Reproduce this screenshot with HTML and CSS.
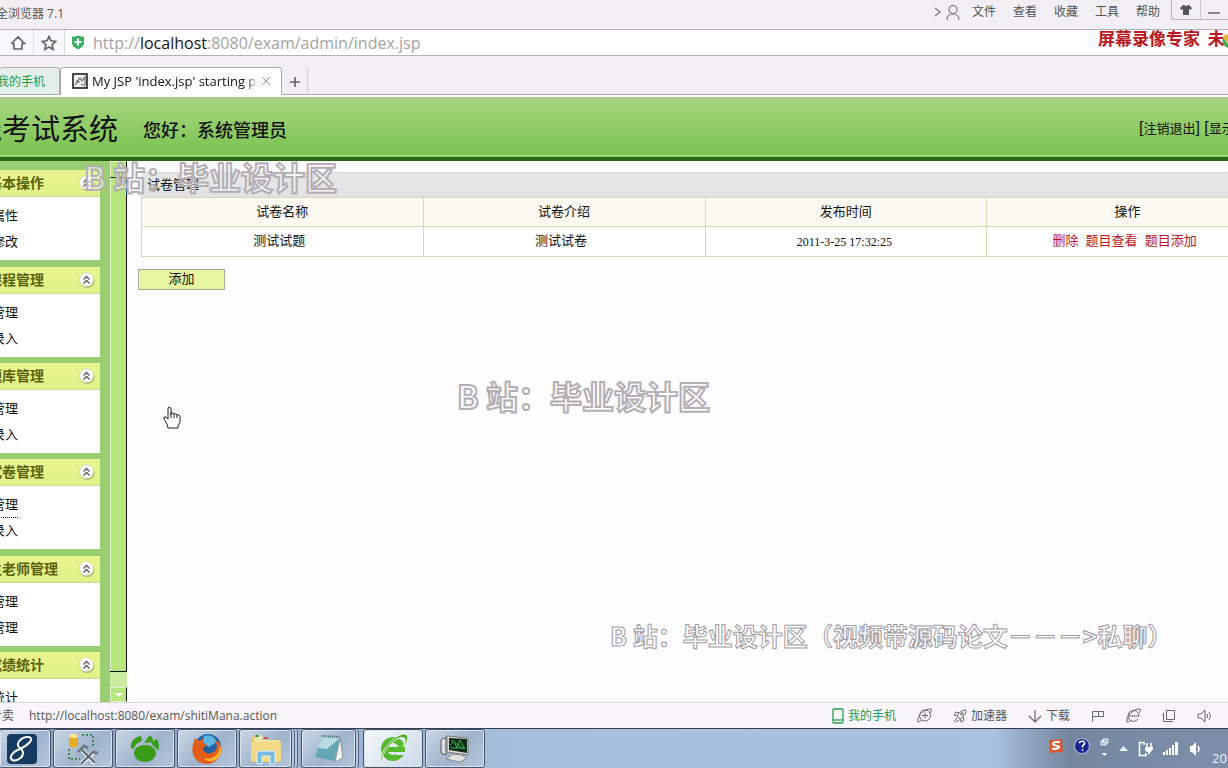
FILE: index.html
```html
<!DOCTYPE html>
<html lang="zh-CN">
<head>
<meta charset="utf-8">
<title>考试系统</title>
<link rel="stylesheet" href="styles.css">
</head>
<body>
<svg class="defs" aria-hidden="true">
  <symbol id="collapse" viewBox="0 0 16 16">
    <circle cx="8.5" cy="9" r="7" fill="#8a9060" opacity=".55"/>
    <circle cx="7.5" cy="7.5" r="7" fill="#fff" stroke="#c8cba8" stroke-width=".7"/>
    <path d="M4.500 7.500l3-3 3 3M4.500 11.500l3-3 3 3" fill="none" stroke="#555" stroke-width="1.300"/>
  </symbol>
</svg>
<div class="app">
  <header class="titlebar">
    <div class="clip-left title"><span>全浏览器 7.1</span></div>
    <nav class="menu">
      <svg width="28" height="18" viewBox="0 0 28 18" fill="none" stroke="#777" stroke-width="1.2"><path d="m2 5 5 4-5 4"/><circle cx="20" cy="6.500" r="4"/><path d="M14 17c0-4 2-6 6-6s6 2 6 6"/></svg>
      <button>文件</button><button>查看</button><button>收藏</button><button>工具</button><button>帮助</button>
    </nav>
    <div class="window-buttons">
      <button aria-label="皮肤"><svg width="12" height="10" viewBox="0 0 12 10"><path d="M3 0h1.500c.5 1.500 2.500 1.500 3 0H9l3 3-1.500 2L9 4v6H3V4L1.500 5 0 3z" fill="#555"/></svg></button>
      <button aria-label="最小化"><svg width="12" height="10" viewBox="0 0 12 10"><path d="M0 8h12" stroke="#666" stroke-width="1.500"/></svg></button>
    </div>
  </header>

  <div class="address">
    <button class="tool" aria-label="主页"><svg width="16" height="16" viewBox="0 0 16 16" fill="none" stroke="#666" stroke-width="1.700"><path d="M4 8v6h8V8M1.500 8.500 8 2l6.500 6.500H12M4 8.500H1.500"/></svg></button>
    <button class="tool" aria-label="收藏"><svg width="16" height="16" viewBox="0 0 16 16" fill="none" stroke="#666" stroke-width="1.700"><path d="m8 1.500 2 4.300 4.700.6-3.500 3.200.9 4.700L8 12l-4.100 2.300.9-4.700L1.300 6.400 6 5.800z"/></svg></button>
    <svg class="shield" width="14" height="15" viewBox="0 0 14 15"><path d="M1 1.500Q4 2 7 .500q3 1.500 6 1V9q-1 3-6 5.500Q2 12 1 9z" fill="#3dae67"/><path d="M7 3.500v7M3.500 7h7" stroke="#fff" stroke-width="2"/></svg>
    <div class="url" role="textbox" aria-label="地址">http://<b>localhost</b>:8080/exam/admin/index.jsp</div>
  </div>

  <div class="tabs">
    <button class="tab phone"><span>我的手机</span></button>
    <div class="tab current">
      <svg width="16" height="16" viewBox="0 0 16 16"><path d="M1 1h14v14H1z" fill="#f4f4f4" stroke="#111" stroke-width="1.500"/><path d="M3 12q2-4 5-3M6 7l2-2 2 3 3-4v8M4 8h3M9 11l4 2" fill="none" stroke="#777" stroke-width="1.300"/></svg>
      <span class="tab-title">My JSP 'index.jsp' starting page</span>
      <button aria-label="关闭"><svg width="8" height="8" viewBox="0 0 8 8"><path d="m0 0 8 8M8 0 0 8" stroke="#999"/></svg></button>
    </div>
    <button class="new-tab" aria-label="新标签"><svg width="10" height="10" viewBox="0 0 10 10"><path d="M5 0v10M0 5h10" stroke="#666" stroke-width="1.700"/></svg></button>
  </div>

  <div class="banner">
    <h1 class="clip-left"><span>线考试系统</span></h1>
    <p>您好：系统管理员</p>
    <div class="session">[<a href="#">注销退出</a>] [<a href="#">显示</a>]</div>
  </div>

  <div class="frames">
    <aside class="sidebar">
      <section><h2><span class="clip-left"><span>基本操作</span></span><svg width="16" height="16"><use href="#collapse"/></svg></h2><ul><li><a href="#">属性</a></li><li><a href="#">修改</a></li></ul></section>
      <section><h2><span class="clip-left"><span>课程管理</span></span><svg width="16" height="16"><use href="#collapse"/></svg></h2><ul><li><a href="#">管理</a></li><li><a href="#">录入</a></li></ul></section>
      <section><h2><span class="clip-left"><span>题库管理</span></span><svg width="16" height="16"><use href="#collapse"/></svg></h2><ul><li><a href="#">管理</a></li><li><a href="#">录入</a></li></ul></section>
      <section><h2><span class="clip-left"><span>试卷管理</span></span><svg width="16" height="16"><use href="#collapse"/></svg></h2><ul><li><a href="#" class="focused">管理</a></li><li><a href="#">录入</a></li></ul></section>
      <section><h2><span class="clip-left wide"><span>生老师管理</span></span><svg width="16" height="16"><use href="#collapse"/></svg></h2><ul><li><a href="#">管理</a></li><li><a href="#">管理</a></li></ul></section>
      <section><h2><span class="clip-left"><span>成绩统计</span></span><svg width="16" height="16"><use href="#collapse"/></svg></h2><ul><li><a href="#">统计</a></li></ul></section>
    </aside>
    <div class="scrollbar">
      <button class="up" aria-label="向上"><svg width="8" height="4" viewBox="0 0 8 4"><path d="M0 4h8L4 0z" fill="#e4f5cc"/></svg></button>
      <div class="thumb"></div>
      <div class="track"></div>
      <button aria-label="向下"><svg width="8" height="4" viewBox="0 0 8 4"><path d="M0 0h8L4 4z" fill="#fff"/></svg></button>
    </div>
    <main>
      <table>
        <caption>试卷管理</caption>
        <thead><tr><th>试卷名称</th><th>试卷介绍</th><th>发布时间</th><th>操作</th></tr></thead>
        <tbody><tr><td>测试试题</td><td>测试试卷</td><td class="date">2011-3-25 17:32:25</td><td><div class="actions"><a href="#">删除</a><a href="#">题目查看</a><a href="#">题目添加</a></div></td></tr></tbody>
      </table>
      <button class="add">添加</button>
    </main>
  </div>

  <footer class="status">
    <div class="clip-left promo"><span>专卖</span></div>
    <span class="link">http://localhost:8080/exam/shitiMana.action</span>
    <div class="status-tools">
      <button class="green"><svg width="12" height="16" viewBox="0 0 12 16" fill="none" stroke="#26a04a" stroke-width="1.300"><rect x="1" y="1" width="10" height="14" rx="1"/><path d="M1 12h10"/></svg>我的手机</button>
      <button aria-label="医生"><svg width="15" height="15" viewBox="0 0 15 15" fill="none" stroke="#666"><circle cx="8" cy="7.500" r="5.500"/><path d="M8 4.500v6M5 7.500h6M1 14C-1 9 8 0 14 1c1 1 0 3-1 4M1 14c2 0 3-1 4-2"/></svg></button>
      <button><svg width="14" height="14" viewBox="0 0 14 14" fill="none" stroke="#666"><path d="M4 7c1-3 5-6 9-6 0 4-3 8-6 9zM4 7 1 6l2-3 3 1M7 10l1 3 3-2-1-3M4 9l-3 4M6 11l-3 2"/><circle cx="9" cy="5" r="1.300"/></svg>加速器</button>
      <button><svg width="14" height="14" viewBox="0 0 14 14" fill="none" stroke="#666" stroke-width="1.200"><path d="M7 1v12M1 7l6 6 6-6"/></svg>下载</button>
      <button aria-label="标记"><svg width="14" height="14" viewBox="0 0 14 14" fill="none" stroke="#666"><path d="M1.500 13V2.500h6v5h-6M7.500 2.500h5v5h-5"/></svg></button>
      <button aria-label="浏览器"><svg width="15" height="15" viewBox="0 0 15 15" fill="none" stroke="#666"><path d="M3 8h10a5.500 5.500 0 1 0-1 3M1 14C-1 9 8 0 14 1c1 1 0 3-1 4M1 14c2 0 3-1 4-2"/></svg></button>
      <button aria-label="窗口"><svg width="14" height="14" viewBox="0 0 14 14" fill="none" stroke="#666"><path d="M4.500 1.500h8v9h-8zM1.500 4v8.500H11"/></svg></button>
      <button aria-label="声音"><svg width="16" height="14" viewBox="0 0 16 14" fill="none" stroke="#666"><path d="M1 5h3l4-4v12L4 9H1zM10 5q1 2 0 4M12 3q3 4 0 8"/></svg></button>
    </div>
  </footer>

  <div class="taskbar">
    <button class="task first" aria-label="应用"><svg width="30" height="30" viewBox="0 0 30 30"><rect width="30" height="30" rx="4" fill="#173b60"/><path d="M13 14C7 10 15 2 22 3c6 2-1 8-9 12-8 3-11 8-8 11 5 2 14-4 10-10-1-2-3-2-2-3" fill="none" stroke="#fff" stroke-width="2"/></svg></button>
    <button class="task" aria-label="数据工具"><svg width="32" height="32" viewBox="0 0 32 32"><path d="M15 2h11v11M2 16v10h11" fill="none" stroke="#3c8a50" stroke-width="2" stroke-dasharray="2 2"/><path d="M2 3v10q5 3 9 0V3" fill="#e5ad22"/><ellipse cx="6.500" cy="3" rx="4.500" ry="2" fill="#ffe692"/><path d="m13 15 15 16M27 19 14 31" stroke="#eef3f5" stroke-width="4"/><path d="m14 16 14 14M26 19 14 31" stroke="#58656d" stroke-width="2"/><path d="m11 19 6-6 4 2M25 19l6 1" fill="none" stroke="#6d7a82" stroke-width="3"/></svg></button>
    <button class="task" aria-label="浏览助手"><svg width="30" height="28" viewBox="0 0 30 28" fill="#399b16"><path d="M4 18c0-5 5-8 11-8s11 3 11 8-5 9-11 9S4 23 4 18zM1 13C0 6 5 2 11 1l1 5C7 8 5 10 4 14zM14 8l5-7c3 0 4 2 4 6zM21 8l5-4c3 2 3 6 3 11-3-1-5-4-8-7z"/></svg></button>
    <button class="task" aria-label="Firefox"><svg width="32" height="32" viewBox="0 0 32 32"><circle cx="17" cy="14" r="13" fill="#1f62a6"/><path d="M13 3q9-3 13 6l-8 5-7-5z" fill="#58b8e3"/><path d="M4 5 8 8l5-3-1 5 4 2-4 3c0 6 8 7 12 3 3-4 2-8-1-12 6 3 8 8 7 13-2 8-8 12-14 12C6 31-1 22 2 12z" fill="#e35d18"/><path d="M28 9c3 11-6 19-15 16 5 7 18 2 17-9z" fill="#f9b52f"/></svg></button>
    <button class="task stack" aria-label="资源管理器"><svg width="34" height="32" viewBox="0 0 34 32"><path d="M2 4h8l2 3h19v22H2z" fill="#e8c963"/><path d="M5 2h8v5h17v19H5z" fill="#f7e6a0"/><path d="M2 9h30v19H2z" fill="#f2da85"/><path d="M6 2h4v2H6z" fill="#42a04d"/><path d="M15 4h4v2h-4z" fill="#d5553b"/><path d="M8 31V20q0-2 2-2h14q2 0 2 2v11h-5v-8h-8v8z" fill="#78bce2" stroke="#dff5ff"/></svg></button>
    <button class="task stack second" aria-label="记事本"><svg width="32" height="30" viewBox="0 0 32 30"><path d="M27 3 30 24l-8 4z" fill="#f1f5f3" stroke="#899594"/><path d="M9 3 27 4 21 27 2 23z" fill="#64a6b5"/><path d="M9 3 27 4 14 15 5 14z" fill="#b5dce0"/><path d="m9 2 18 1" stroke="#526d76" stroke-width="2" stroke-dasharray="1 1"/></svg></button>
    <button class="task active" aria-label="安全浏览器"><svg width="32" height="32" viewBox="0 0 32 32"><circle cx="16" cy="16" r="9" fill="none" stroke="#55b82f" stroke-width="6"/><path d="M8 14h20v5H8z" fill="#55b82f"/><path d="M19 19h12v3H19z" fill="#dce6f0"/><path d="M6 30C-4 23 23-5 30 2c2 3 0 8-4 12 2-5 3-8 1-9C20 1 1 22 6 30z" fill="#4fae2a" stroke="#fff" stroke-width=".8"/></svg></button>
    <button class="task" aria-label="录像专家"><svg width="32" height="30" viewBox="0 0 32 30"><path d="M2 6 7 3v18l-5-2z" fill="#ddd" stroke="#555"/><path d="M8 2 29 4v17L8 18z" fill="#ddd" stroke="#777"/><path d="M10 4 28 5v14L10 16z" fill="#102b18"/><path d="m11 11 4-4 3 7 3-8 5 9M11 14h15M12 6l13 9" fill="none" stroke="#39a64a"/><path d="m14 20 8 1 6 3-7 4-14-3z" fill="#e1e2df" stroke="#888"/></svg></button>
    <div class="tray">
      <svg class="high" width="16" height="16" viewBox="0 0 15 15"><path d="m1 2 12-1 1 12-12 1z" fill="#df5631"/><path d="M11 4C4 3 3 6 7 7c6 1 3 4-3 3" fill="none" stroke="#fff" stroke-width="2"/></svg>
      <svg class="high" width="16" height="16" viewBox="0 0 15 15"><circle cx="7.500" cy="7.500" r="7" fill="#172494" stroke="#a8b6d6"/><path d="M5 5q0-2 2.500-2T10 5q0 1-2 2.500V9M8 10.500v1.500" fill="none" stroke="#fff" stroke-width="1.500"/></svg>
      <svg class="high" width="9" height="20" viewBox="0 0 9 20"><path d="M3 1h5v4H3zM1 3h5v4H1z" fill="#7f90aa" stroke="#fff"/><path d="M2 15h5l-2.500 3z" fill="#fff"/></svg>
      <svg width="9" height="5" viewBox="0 0 9 5"><path d="M0 5 4.500 0 9 5z" fill="#eef3fa"/></svg>
      <svg width="15" height="16" viewBox="0 0 15 16" fill="none" stroke="#fff" stroke-width="1.600"><path d="M6 4V1.500H1.500v13H8V12"/><path d="M9 2v4M13 2v4"/><path d="M7 6h8v2q-1 3-3 3v2h-2v-2q-3 0-3-3z" fill="#fff" stroke="none"/></svg>
      <svg width="16" height="13" viewBox="0 0 16 13" fill="#fff"><path d="M0 10h2v3H0zM3 8h2v5H3zM6 6h2v7H6zM9 3h2v10H9zM12 0h3v13h-3z"/></svg>
      <svg width="13" height="14" viewBox="0 0 13 14"><path d="M1 4h2l4-4v14l-4-4H1z" fill="#fff"/><path d="M9 4q2 3 0 6" fill="none" stroke="#fff" stroke-width="1.500"/></svg>
      <time>2011</time>
    </div>
  </div>
</div>

<div class="overlay recorder">屏幕录像专家&nbsp; 未</div>
<svg class="overlay badge" width="6" height="16" viewBox="0 0 6 16"><path d="M6 1Q0 2 1 6l5 4z" fill="#e7b53a"/><path d="M1 5Q-1 12 6 15v-4z" fill="#3eaa56"/></svg>
<div class="overlay watermark top">B 站：毕业设计区</div>
<div class="overlay watermark middle">B 站：毕业设计区</div>
<div class="overlay watermark small">B 站：毕业设计区（视频带源码论文－－－&gt;私聊）</div>
<svg class="overlay cursor" width="18" height="23" viewBox="0 0 18 23"><path d="M5 22 4 18 1 13q-1-3 2-2l2 2V2q1-2 3 0v7-2q2-1 3 1 2-1 3 1 2-1 3 1v6l-2 4v2z" fill="#fff" stroke="#222"/><path d="M8 8v4M11 8v4M14 9v3" stroke="#222"/></svg>
</body>
</html>
```
FILE: styles.css
```css
* { box-sizing: border-box; }
body {
  margin: 0;
  overflow: hidden;
  font: 13px/18px "Liberation Serif", "Noto Sans CJK SC", serif;
  color: #111;
}
button {
  display: flex;
  align-items: center;
  justify-content: center;
  margin: 0;
  padding: 0;
  border: 0;
  background: none;
  font: inherit;
  color: inherit;
  white-space: nowrap;
}
svg { display: block; flex: none; }
a { color: inherit; text-decoration: none; }
h1, h2, p, ul { margin: 0; padding: 0; list-style: none; }
.defs { position: absolute; width: 0; height: 0; }
.app { display: flex; flex-direction: column; height: 100vh; }
.clip-left {
  display: flex;
  justify-content: flex-end;
  flex: none;
  overflow: hidden;
  white-space: nowrap;
}

.titlebar, .address, .tabs, .status {
  display: flex;
  flex: none;
  background: #f2eff4;
  font-family: "Open Sans", "Noto Sans CJK SC", sans-serif;
  font-size: 12px;
  color: #555;
}
.titlebar { height: 30px; border-bottom: 1px solid #b4b0b7; }
.title { width: 64px; padding-top: 5px; }
.menu { display: flex; align-items: center; gap: 17px; height: 24px; margin-left: auto; }
.menu svg { margin-right: -6px; }
.window-buttons {
  display: flex;
  width: 57px;
  height: 20px;
  margin-left: 11px;
  border: 1px solid #b8b5bb;
  border-width: 0 0 1px 1px;
  border-radius: 0 0 0 3px;
}
.window-buttons button { flex: 1; }
.window-buttons button + button { border-left: 1px solid #ccc8cf; }

.address { height: 26px; align-items: center; background: #fff; border-bottom: 1px solid #b4b0b7; }
.tool { width: 31px; height: 25px; background: #f8f7f9; border-right: 1px solid #ddd9df; }
.tool:first-child { width: 34px; padding-left: 3px; }
.shield { margin: 0 8px 0 6px; }
.url { flex: 1; font-size: 16px; line-height: 24px; color: #a3a3a3; }
.url b { font-weight: 400; color: #111; }

.tabs { height: 41px; align-items: flex-end; border-bottom: 2px solid #fff; box-shadow: inset 0 -1px #aaa6ad; }
.tab { display: flex; align-items: center; height: 28px; border: 1px solid #aaa; border-radius: 4px 4px 0 0; }
.phone { width: 60px; justify-content: flex-end; overflow: hidden; padding: 2px 14px 0 0; border-left: 0; background: #e5efea; color: #26984b; }
.current { width: 222px; padding: 0 11px; gap: 4px; background: #fff; border-bottom-color: #fff; color: #111; }
.tab-title { flex: 1; overflow: hidden; white-space: nowrap; font-size: 13px; mask-image: linear-gradient(90deg, #000 93%, transparent); }
.new-tab { width: 26px; height: 27px; border-right: 1px solid #ccc; }

.banner {
  display: flex;
  flex: none;
  align-items: center;
  height: 64px;
  border-bottom: 4px solid #2b6412;
  background: linear-gradient(#a8ca88, #a4d57c 5px, #7bc351 57px, #a8dc83 59px, #78bb50 60px);
}
.banner h1 { width: 118px; font: 400 29px/40px "Noto Sans CJK SC", serif; }
.banner p { flex: 1; margin-left: 25px; padding-top: 4px; font: 500 18px/24px "Noto Sans CJK SC", sans-serif; }
.session { width: 89px; overflow: hidden; white-space: nowrap; padding-top: 2px; font: 16px/20px "Liberation Sans", "Noto Sans CJK SC", sans-serif; }
.session a { font-size: 13px; }

.frames { display: flex; flex: 1; min-height: 0; }
.sidebar {
  width: 110px;
  flex: none;
  overflow: hidden;
  padding: 9px 10px 0 0;
  background: #99ce73;
}
.sidebar section { margin-bottom: 6px; background: #fff; }
.sidebar section:nth-child(3n + 1) { margin-bottom: 7px; }
.sidebar h2 {
  display: flex;
  align-items: center;
  justify-content: space-between;
  height: 27px;
  padding-right: 5px;
  background: linear-gradient(#e9f58e, #def189);
  border-bottom: 1px solid #cfd9a0;
  border-radius: 0 3px 0 0;
  font: 700 14px/24px "Noto Sans CJK SC", sans-serif;
  color: #59620d;
}
.sidebar h2 .clip-left { width: 44px; padding-bottom: 2px; }
.sidebar h2 .wide { width: 58px; }
.sidebar ul { height: 63px; padding-top: 6px; }
.sidebar li { display: flex; justify-content: flex-end; width: 18px; line-height: 26px; overflow: hidden; white-space: nowrap; }
.sidebar .focused { line-height: 25px; border-bottom: 1px dotted #222; }

.scrollbar { display: flex; flex-direction: column; width: 17px; flex: none; background: #b8e67e; }
.thumb { flex: 1; border: solid #111; border-width: 0 1px 1px 0; box-shadow: inset 1px 0 #e4f5cc; }
.track { height: 15px; background: repeating-conic-gradient(#b8e67e 0 25%, #dcf3c0 0 50%) 0 0 / 2px 2px; }
.scrollbar button { height: 15px; border: 1px solid #e4f5cc; border-right-color: #111; }
.scrollbar .up { height: 17px; border-bottom-color: #111; }

main { flex: 1; min-width: 0; overflow: hidden; padding: 11px 0 0 11px; background: #fefdfe; }
table { width: calc(100% + 38px); margin-left: 3px; table-layout: fixed; border-collapse: collapse; }
caption { height: 25px; padding: 2px 6px; text-align: left; line-height: 20px; border-top: 1px solid #d5d5c8; background: linear-gradient(#e6e8e5, #e2e2e4); }
th, td { height: 30px; padding: 0; border: 1px solid #d8d6b3; text-align: center; font-weight: 400; }
th { height: 29px; background: #fcf9f2; }
td { padding: 0 6px 2px 0; background: #fff; }
.date { padding: 0 3px 0 0; font-size: 12px; }
.actions { display: flex; justify-content: center; gap: 7px; color: #b91721; }
.add { width: 87px; height: 21px; margin-top: 12px; padding-bottom: 2px; border: 1px solid #aaa999; background: #e8f5a0; }

.status { align-items: center; height: 26px; background: #f9f6fb; border-top: 1px solid #d8d4dc; }
.promo { width: 14px; margin-right: 15px; }
.status-tools { display: flex; align-items: center; gap: 21px; margin-left: auto; padding-right: 15px; }
.status-tools button { gap: 4px; }
.status-tools .green { color: #26984b; }

.taskbar {
  display: flex;
  flex: none;
  gap: 2px;
  height: 40px;
  border-top: 1px solid #343e52;
  background: linear-gradient(90deg, #8d9eb8, #a5bedc 42%, #a8c1df 81%, #74879f 87%, #7d8ea9);
}
.task {
  width: 60px;
  border: 1px solid #465369;
  border-radius: 3px;
  box-shadow: inset 0 0 0 1px #d9e4f0;
  background: linear-gradient(135deg, #cbd7e5, #9fb3cc 55%, #b5c7dc);
}
.first { width: 51px; border-left: 0; padding-right: 7px; }
.stack { width: 53px; margin-right: 7px; box-shadow: inset 0 0 0 1px #d9e4f0, 2px 0 #b6c7dc, 3px 0 #566a88, 5px 0 #b6c7dc, 6px 0 #566a88; }
.second { width: 55px; margin-right: 5px; box-shadow: inset 0 0 0 1px #d9e4f0, 2px 0 #b6c7dc, 3px 0 #566a88; }
.active { background: linear-gradient(135deg, #f5f8fb, #cbd9e9); }
.tray { display: flex; align-items: center; gap: 10px; margin-left: auto; color: #eef2f8; font: 13px/16px "Open Sans", sans-serif; }
.tray .high { align-self: flex-start; margin-top: 9px; }
.tray time { align-self: flex-end; width: 16px; overflow: hidden; margin-bottom: 2px; }

.overlay { position: absolute; pointer-events: none; white-space: nowrap; }
.recorder { right: 0; top: 27px; width: 130px; overflow: hidden; font: 700 17px/22px "Noto Sans CJK SC", sans-serif; color: #b91721; }
.badge { right: 0; top: 33px; }
.watermark { font: 700 32px/40px "Noto Sans CJK SC", sans-serif; color: rgba(255, 255, 255, .5); -webkit-text-stroke: 2px #b3afb5; }
.top { left: 84px; top: 156px; }
.middle { left: 457px; top: 375px; }
.small { left: 610px; top: 615px; font-size: 25px; -webkit-text-stroke-width: 1px; -webkit-text-stroke-color: #a09ba2; }
.cursor { left: 163px; top: 406px; }
```
